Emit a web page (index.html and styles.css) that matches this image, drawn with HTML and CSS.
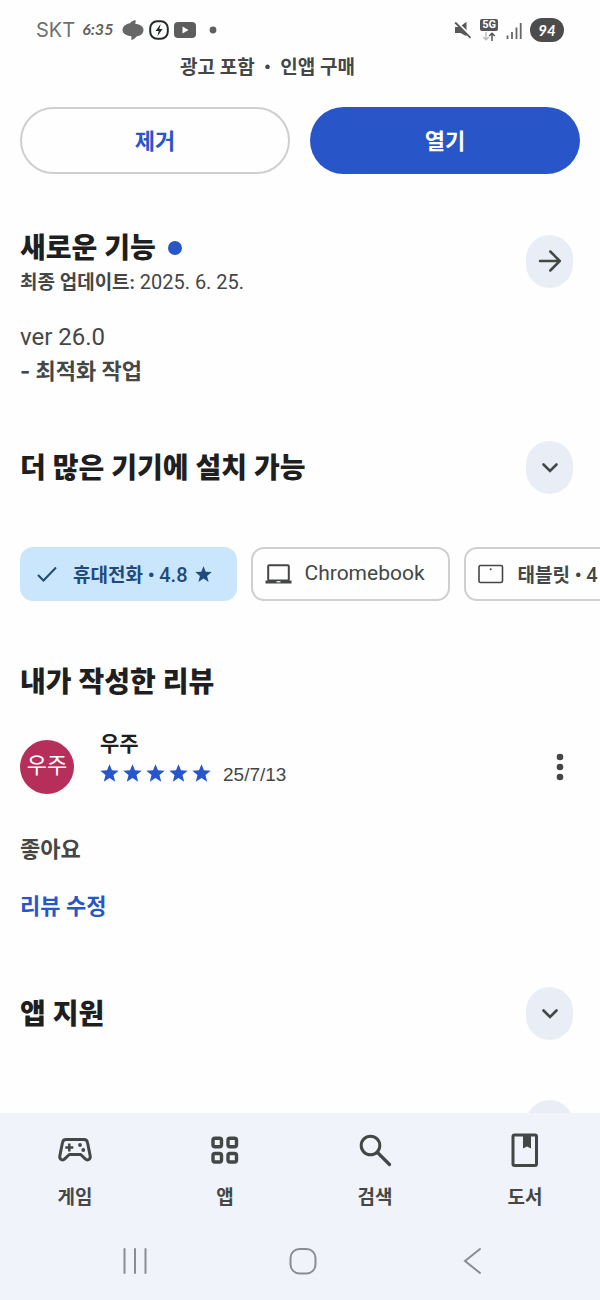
FILE: index.html
```html
<!DOCTYPE html>
<html lang="ko">
<head>
<meta charset="utf-8">
<meta name="viewport" content="width=device-width, initial-scale=1">
<title>앱 정보</title>
<link rel="stylesheet" href="styles.css">
</head>
<body>
<svg class="defs" aria-hidden="true">
  <symbol id="star" viewBox="0 0 20 20"><path d="M10 .2l2.600 6.500 7.100.5-5.500 4.500 1.800 7-6-3.900-6 3.900 1.800-7L.3 7.200l7.100-.5z" fill="currentColor"/></symbol>
  <symbol id="chevron" viewBox="0 0 24 24"><path d="M5.500 8.500l6.500 6.500L18.500 8.500" fill="none" stroke="currentColor" stroke-width="2.600" stroke-linecap="round"/></symbol>
</svg>
<div class="app">
  <header class="status">
    <span class="carrier">SKT</span>
    <span class="time">6:35</span>
    <svg width="22" height="22" viewBox="0 0 22 22" aria-hidden="true"><path d="M13.500 1c.2 1.200.2 2.500-.2 4 4.700 0 8.200 2.500 8.200 6 0 3.600-3.200 6-7.200 6.500-1 1.800-2.600 3.200-5 3.500.3-1.500.2-2.600-.1-4C4.500 17 .5 14.500.5 11 .5 7.500 4 4.800 8 4.300 9.300 2.600 11 1.400 13.500 1z" fill="#676767"/></svg>
    <svg width="20" height="20" viewBox="0 0 20 20" aria-hidden="true"><rect x="1.200" y="1.200" width="17.600" height="17.600" rx="7" fill="none" stroke="#25292b" stroke-width="2"/><path d="M11.700 4L6.500 11h3.200l-1.300 5.200L13.600 9h-3.200z" fill="#25292b"/></svg>
    <svg width="22" height="16" viewBox="0 0 22 16" aria-hidden="true"><rect width="22" height="16" rx="4" fill="#5d5d5d"/><path d="M8.500 4.500v7l6-3.500z" fill="#fff"/></svg>
    <svg class="s-dot" width="8" height="8" viewBox="0 0 8 8" aria-hidden="true"><circle cx="4" cy="4" r="3.400" fill="#606060"/></svg>
    <span class="status-right">
      <svg width="18" height="18" viewBox="0 0 18 18" aria-hidden="true"><path d="M1 6h4.500L12.500.8v14.400L6.500 12H1z" fill="#585858"/><path d="M1.800 0L18 16" stroke="#fefefe" stroke-width="2"/><path d="M1.200 1.500L16.500 16.800" stroke="#585858" stroke-width="1.800"/></svg>
      <span class="net"><span class="net-tag">5G</span><svg width="14" height="9" viewBox="0 0 14 9" aria-hidden="true"><path d="M4 0v7.500M1.200 5L4 7.800 6.800 5" fill="none" stroke="#bbb" stroke-width="1.400"/><path d="M10 9V1.500M7.200 4L10 1.200 12.800 4" fill="none" stroke="#555" stroke-width="1.500"/></svg></span>
      <svg width="16" height="17" viewBox="0 0 16 17" aria-hidden="true"><path d="M1.500 13.500v3.500M6 10v7M10.500 5.500V17M14.700 1V17" stroke="#666" stroke-width="1.800"/></svg>
      <span class="battery">94</span>
    </span>
  </header>

  <main class="content">
    <p class="note">광고 포함 &nbsp;•&nbsp; 인앱 구매</p>
    <div class="actions">
      <button class="btn btn-outline" type="button">제거</button>
      <button class="btn btn-fill" type="button">열기</button>
    </div>

    <section class="news">
      <div class="section-head">
        <div>
          <h2 class="title">새로운 기능<span class="dot"></span></h2>
          <p class="updated">최종 업데이트: <span class="num">2025. 6. 25.</span></p>
        </div>
        <button class="round" type="button" aria-label="자세히"><svg width="24" height="24" viewBox="0 0 24 24" aria-hidden="true"><path d="M2 12h19.500M12.300 2.500l9.500 9.500-9.500 9.500" fill="none" stroke="currentColor" stroke-width="2.500" stroke-linecap="round" stroke-linejoin="round"/></svg></button>
      </div>
      <p class="version">ver 26.0</p>
      <p class="changes">- 최적화 작업</p>
    </section>

    <section class="devices">
      <div class="section-head">
        <h2 class="title">더 많은 기기에 설치 가능</h2>
        <button class="round" type="button" aria-label="펼치기"><svg width="24" height="24" aria-hidden="true"><use href="#chevron"/></svg></button>
      </div>
      <div class="chips">
        <button class="chip chip-on" type="button"><svg width="20" height="20" viewBox="0 0 20 20" aria-hidden="true"><path d="M1 11l5.500 5.500L19 3.500" fill="none" stroke="currentColor" stroke-width="2"/></svg><span class="chip-text">휴대전화 • <span class="num">4.8</span></span><svg class="chip-star" width="17" height="17" aria-hidden="true"><use href="#star"/></svg></button>
        <button class="chip chip-mac" type="button"><svg width="28" height="20" viewBox="0 0 28 20" aria-hidden="true"><rect x="3.200" y="1.200" width="20.600" height="15.300" rx="1" fill="none" stroke="currentColor" stroke-width="2"/><path d="M.5 16.500h26v3H.5z" fill="currentColor"/><path d="M11.500 17.200h4v1.200h-4z" fill="#fff"/></svg><span class="chip-text">Chromebook</span></button>
        <button class="chip chip-tab" type="button"><svg width="26" height="20" viewBox="0 0 26 20" aria-hidden="true"><rect x="1" y="1.500" width="23.500" height="17" rx="1.500" fill="none" stroke="currentColor" stroke-width="1.600"/><circle cx="12.700" cy="5.200" r="1" fill="currentColor"/></svg><span class="chip-text">태블릿 • <span class="num">4</span></span></button>
      </div>
    </section>

    <section class="review">
      <h2 class="title">내가 작성한 리뷰</h2>
      <div class="author">
        <span class="avatar">우주</span>
        <div class="who">
          <p class="name">우주</p>
          <div class="rating">
            <span class="stars" role="img" aria-label="별 5개"><svg width="19" height="19"><use href="#star"/></svg><svg width="19" height="19"><use href="#star"/></svg><svg width="19" height="19"><use href="#star"/></svg><svg width="19" height="19"><use href="#star"/></svg><svg width="19" height="19"><use href="#star"/></svg></span>
            <span class="date">25/7/13</span>
          </div>
        </div>
        <button class="more" type="button" aria-label="더보기"><svg width="8" height="28" viewBox="0 0 8 28" aria-hidden="true"><g fill="currentColor"><circle cx="4" cy="4" r="3.300"/><circle cx="4" cy="14" r="3.300"/><circle cx="4" cy="24" r="3.300"/></g></svg></button>
      </div>
      <p class="comment">좋아요</p>
      <a class="edit" href="#">리뷰 수정</a>
    </section>

    <section class="support">
      <div class="section-head">
        <h2 class="title">앱 지원</h2>
        <button class="round" type="button" aria-label="펼치기"><svg width="24" height="24" aria-hidden="true"><use href="#chevron"/></svg></button>
      </div>
      <div class="section-head next">
        <button class="round" type="button" aria-label="자세히"></button>
      </div>
    </section>
  </main>

  <footer class="bottom">
    <nav class="tabs">
      <a class="tab" href="#"><svg width="36" height="36" viewBox="0 0 36 36" aria-hidden="true"><path d="M9 7.500h18c2 0 3.200 1.300 3.500 3l2.700 13.500c.5 3.500-2.700 5-4.900 2.900L23.700 22.500H12.300l-4.600 4.400c-2.200 2.100-5.400.6-4.900-2.900L5.500 10.500c.3-1.700 1.500-3 3.500-3z" fill="none" stroke="currentColor" stroke-width="3" stroke-linejoin="round"/><path d="M12.300 11.500v8M8.300 15.500h8" stroke="currentColor" stroke-width="2.500"/><circle cx="23" cy="13" r="1.900" fill="currentColor"/><circle cx="26.300" cy="18" r="1.900" fill="currentColor"/></svg>게임</a>
      <a class="tab" href="#"><svg width="36" height="36" viewBox="0 0 36 36" aria-hidden="true"><g fill="none" stroke="currentColor" stroke-width="3.400"><rect x="6" y="6.300" width="8.500" height="8.500" rx="2"/><rect x="21" y="6.300" width="8.500" height="8.500" rx="2"/><rect x="6" y="21.500" width="8.500" height="8.500" rx="2"/><rect x="21" y="21.500" width="8.500" height="8.500" rx="2"/></g></svg>앱</a>
      <a class="tab" href="#"><svg width="36" height="36" viewBox="0 0 36 36" aria-hidden="true"><circle cx="13.500" cy="13.500" r="9.300" fill="none" stroke="currentColor" stroke-width="3"/><path d="M20.500 20.500l12 12" stroke="currentColor" stroke-width="3.200" stroke-linecap="round"/></svg>검색</a>
      <a class="tab" href="#"><svg width="36" height="36" viewBox="0 0 36 36" aria-hidden="true"><rect x="6" y="3" width="23.500" height="30.500" rx="1.500" fill="none" stroke="currentColor" stroke-width="3"/><path d="M16 3h8v13.500l-4-2-4 2z" fill="currentColor"/></svg>도서</a>
    </nav>
    <div class="system">
      <button class="sys" type="button" aria-label="최근 앱"><svg width="28" height="28" viewBox="0 0 28 28" aria-hidden="true"><path d="M3.500 2v24M14 2v24M24.500 2v24" stroke="#8a8c8f" stroke-width="2" stroke-linecap="round"/></svg></button>
      <button class="sys" type="button" aria-label="홈"><svg width="28" height="28" viewBox="0 0 28 28" aria-hidden="true"><rect x="1.500" y="2" width="25" height="24.500" rx="9" fill="none" stroke="#8a8c8f" stroke-width="2"/></svg></button>
      <button class="sys" type="button" aria-label="뒤로"><svg width="28" height="28" viewBox="0 0 28 28" aria-hidden="true"><path d="M22 2L7 14l15 12" fill="none" stroke="#8a8c8f" stroke-width="2" stroke-linecap="round"/></svg></button>
    </div>
  </footer>
</div>
</body>
</html>
```
FILE: styles.css
```css
* { box-sizing: border-box; }
body {
  margin: 0;
  background: #fefefe;
  color: #444746;
  font-family: Roboto, "Noto Sans CJK KR", sans-serif;
}
h2, p { margin: 0; }
button { padding: 0; border: 0; background: none; color: inherit; font: inherit; cursor: pointer; }
a { color: inherit; text-decoration: none; }
svg { display: block; flex: none; }
.defs { position: absolute; width: 0; height: 0; }
.app { display: flex; flex-direction: column; height: 100vh; }

.status {
  display: flex;
  align-items: center;
  gap: 5px;
  height: 56px;
  padding: 4px 36px 0;
  flex: none;
}
.carrier { color: #707070; font-family: Inter, sans-serif; font-size: 20px; }
.time { margin: 0 4px 3px 2px; color: #606060; font-family: Lato, sans-serif; font-size: 16px; font-weight: 700; font-style: italic; }
.s-dot { margin-left: 8px; }
.status-right { display: flex; align-items: center; gap: 8px; margin-left: auto; }
.net { display: flex; flex-direction: column; align-items: center; gap: 1px; }
.net-tag { padding: 0 2px; border-radius: 2px; background: #555; color: #fff; font-size: 11px; font-weight: 700; line-height: 12px; }
.battery {
  width: 34px;
  border-radius: 12px;
  background: #4c4c4c;
  color: #fff;
  font-family: Lato, sans-serif;
  font-size: 15px;
  font-weight: 700;
  font-style: italic;
  line-height: 24px;
  text-align: center;
}

.content { flex: 1; min-height: 0; overflow: hidden; padding: 0 20px; }
.note { padding-left: 160px; font-size: 19px; font-weight: 700; line-height: 24px; }
.actions { display: grid; grid-template-columns: 1fr 1fr; gap: 20px; margin-top: 27px; }
.btn { height: 67px; padding-bottom: 4px; border-radius: 34px; font-size: 22px; font-weight: 700; }
.btn-outline { border: 2px solid #cfcfcf; color: #2856c8; }
.btn-fill { background: #2856c8; color: #fff; }

.section-head { display: flex; align-items: center; justify-content: space-between; padding-right: 7px; }
.title { padding-top: 3px; color: #1f1f1f; font-size: 28px; font-weight: 900; line-height: 40px; }
.dot { display: inline-block; width: 14px; height: 14px; margin-left: 12px; border-radius: 50%; background: #2856c8; vertical-align: 3px; }
.round {
  display: flex;
  align-items: center;
  justify-content: center;
  width: 47px;
  height: 53px;
  border-radius: 24px;
  background: #e9eef6;
}
.news { margin-top: 52px; }
.updated { font-size: 19px; font-weight: 700; line-height: 27px; }
.num { font-size: 20px; font-weight: 400; }
.version { margin-top: 24px; font-size: 24px; line-height: 34px; }
.changes { font-family: Inter, "Noto Sans CJK KR", sans-serif; font-size: 22px; font-weight: 700; line-height: 34px; }

.devices { margin-top: 53px; }
.chips { display: flex; gap: 14px; margin: 53px -20px 0 0; overflow: hidden; }
.chip {
  display: flex;
  align-items: center;
  flex: none;
  height: 54px;
  border: 2px solid #cfcfcf;
  border-radius: 13px;
  font-size: 19px;
  font-weight: 700;
  white-space: nowrap;
}
.chip-text { padding-bottom: 2px; }
.chip .num { font-weight: 500; }
.chip-on { gap: 16px; padding: 0 23px 0 15px; border-color: #cae6fd; background: #cae6fd; color: #1f4a7c; }
.chip-star { margin-left: -9px; }
.chip-mac { gap: 12px; padding: 0 23px 0 12px; font-size: 21px; font-weight: 400; }
.chip-tab { gap: 14px; padding: 0 36px 0 12px; }

.review { margin-top: 59px; }
.author { display: flex; align-items: center; margin-top: 28px; padding-right: 16px; }
.avatar {
  width: 54px;
  margin-top: 9px;
  padding-bottom: 2px;
  border-radius: 50%;
  background: #b62f5b;
  color: #fff;
  font-size: 22px;
  font-weight: 400;
  line-height: 52px;
  text-align: center;
}
.who { margin-left: 26px; }
.name { color: #1f1f1f; font-size: 21px; font-weight: 700; line-height: 25px; }
.rating { display: flex; align-items: center; gap: 12px; }
.stars { display: flex; gap: 4px; margin-bottom: 4px; color: #2856c8; }
.date { font-family: "Liberation Sans", sans-serif; font-size: 19px; line-height: 36px; }
.more { margin: 9px 0 0 auto; }
.comment { margin-top: 40px; font-size: 22px; font-weight: 700; line-height: 32px; }
.edit { display: inline-block; margin-top: 25px; color: #2856c8; font-size: 22px; font-weight: 700; line-height: 32px; }

.support { margin-top: 64px; }
.next { justify-content: flex-end; margin-top: 60px; }

.bottom { flex: none; background: #f0f3f9; }
.tabs { display: grid; grid-template-columns: repeat(4, 1fr); padding-top: 19px; }
.tab { display: flex; flex-direction: column; align-items: center; gap: 16px; font-size: 19px; font-weight: 700; line-height: 28px; }
.system { display: flex; justify-content: space-around; padding: 35px 44px 25px 51px; }
.sys { display: flex; }
```
